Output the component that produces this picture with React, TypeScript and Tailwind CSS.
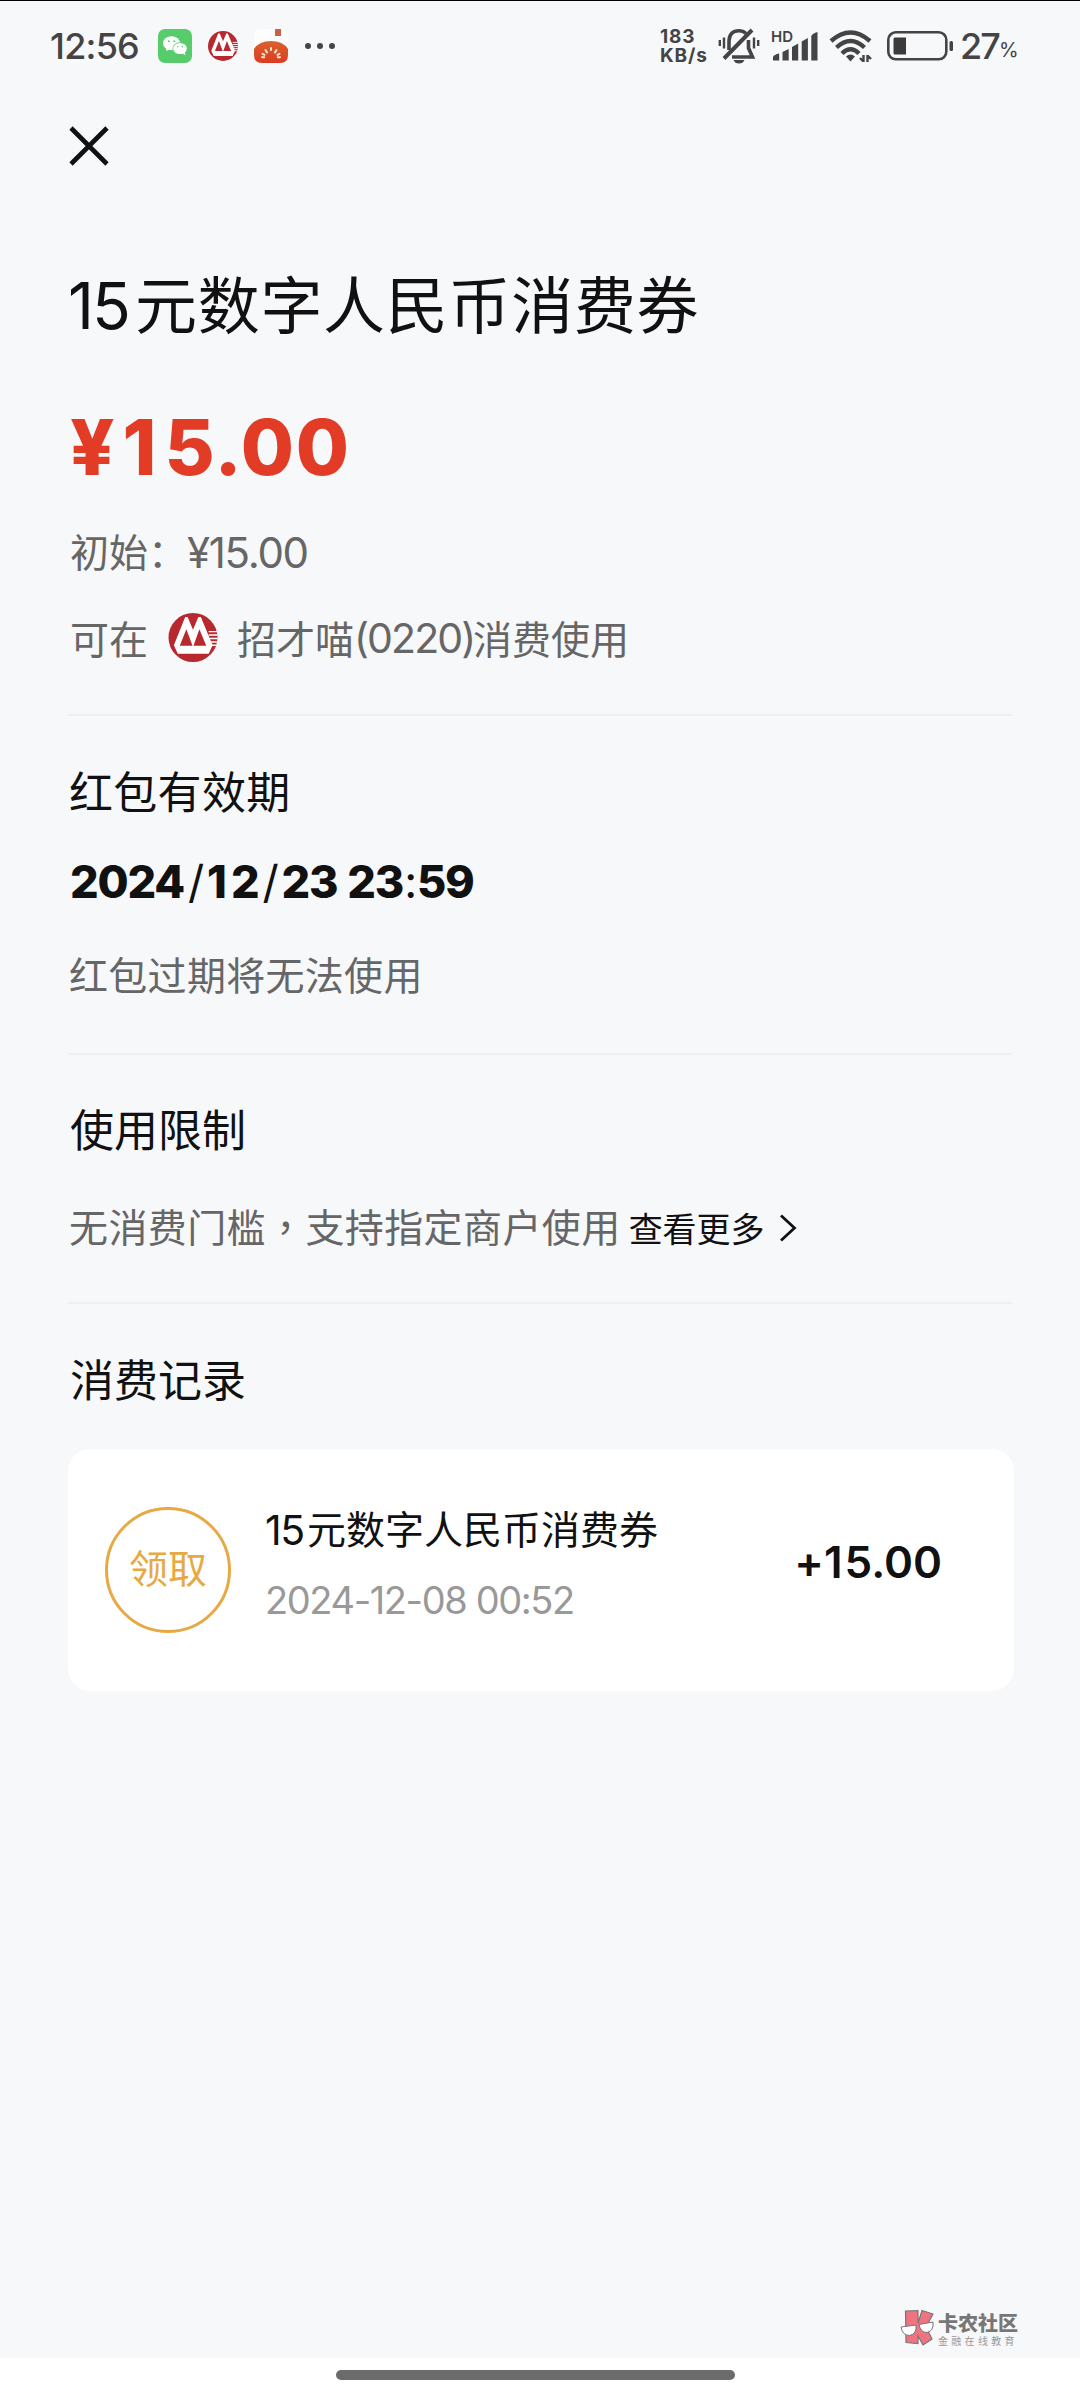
import React from "react";

const cjk = "font-['Noto_Sans_CJK_SC',sans-serif]";
const num = "font-['Inter','Noto_Sans_CJK_SC',sans-serif]";

const BankLogo: React.FC<{ className?: string }> = ({ className }) => (
  <svg viewBox="0 0 50 50" className={className}>
    <circle cx="25" cy="25" r="25" fill="#b8292f" />
    <path d="M17 4 H19.500 L25 17 L30.500 4 H33 L45 33 L41 41.500 H9.500 L5.500 33 Z" fill="#fff" />
    <path d="M18.200 16.500 L24.500 33.500 H11.500 Z" fill="#b8292f" />
    <path d="M31.500 16.500 L38.500 33.500 H25.500 Z" fill="#b8292f" />
    <path d="M41 19 H49.500 M41 22.500 H50 M42 26 H50 M43 29.500 H50 M44 33 H49" stroke="#fff" strokeWidth="1.500" />
  </svg>
);

const WechatIcon = () => (
  <svg width="34" height="34" viewBox="0 0 34 34">
    <rect width="34" height="34" rx="7" fill="#57cc6b" />
    <path d="M8 22 L8.500 18 L12 20 Z" fill="#fff" />
    <ellipse cx="13.500" cy="14.300" rx="8.500" ry="7" fill="#fff" />
    <ellipse cx="22" cy="19.500" rx="7.500" ry="6.300" fill="#57cc6b" />
    <ellipse cx="22" cy="19.500" rx="6.800" ry="5.600" fill="#fff" />
    <path d="M24 24 L27.300 26.300 L27 22.500 Z" fill="#fff" />
    <circle cx="10.800" cy="12.200" r="1" fill="#57cc6b" />
    <circle cx="16.300" cy="12.200" r="1" fill="#57cc6b" />
    <circle cx="19.800" cy="17.800" r=".8" fill="#57cc6b" />
    <circle cx="24.300" cy="17.800" r=".8" fill="#57cc6b" />
  </svg>
);

const PumpkinIcon = () => (
  <svg width="34" height="34" viewBox="0 0 34 34">
    <defs>
      <linearGradient id="pumpkin" x1="0" y1="0" x2="0" y2="1">
        <stop offset="0" stopColor="#d9642f" />
        <stop offset="1" stopColor="#dc3a20" />
      </linearGradient>
    </defs>
    <path d="M0 12 V7 Q0 0 7 0 H27 Q34 0 34 7 V18 H0 Z" fill="#fdfdfd" />
    <rect x="21" y="0" width="6" height="7" fill="#cd6046" />
    <path d="M0 20 Q5 12 17 12 Q29 12 34 20 V26 Q34 34 26 34 H8 Q0 34 0 26 Z" fill="url(#pumpkin)" />
    <path
      d="M17 19 V21 M11.500 21 L13 23.500 M22.500 21 L21 23.500 M8.500 24.800 L10.500 25.800 M25.500 24.800 L23.500 25.800 M8 28.300 H10.200 M26 28.300 H23.800"
      stroke="#ffe9d0"
      strokeWidth="2"
      strokeLinecap="round"
    />
  </svg>
);

const MutedBellIcon = () => (
  <svg width="42" height="36" viewBox="0 0 42 36" fill="none" stroke="#444" strokeWidth="3.600">
    <path d="M11 22 V13 Q11.500 2.800 21 2.800 Q25 2.800 28 5.500" />
    <path d="M30.500 12 V20 L34.500 29 H14" />
    <path d="M6 30.500 L34 2" strokeWidth="4" />
    <path d="M15.500 32 H26.500 Q25 35.500 21 35.500 Q17 35.500 15.500 32 Z" fill="#444" stroke="none" />
    <path d="M1.800 12 V18 M6 9.500 V20.500 M36 9.500 V20.500 M40.200 12 V18" strokeWidth="2.400" />
  </svg>
);

const SignalIcon = () => (
  <svg width="46" height="30" viewBox="0 0 46 30" fill="#444">
    <path d="M0 29.500 V26 Q1 23.500 6.200 22.500 V29.500 Z" />
    <path d="M9.500 29.500 V21 L15.700 18 V29.500 Z" />
    <path d="M19 29.500 V16 L25.200 12.500 V29.500 Z" />
    <path d="M28.700 29.500 V10.500 L34.900 7 V29.500 Z" />
    <path d="M38.300 29.500 V5 Q39.500 2.500 44.500 1 V29.500 Z" />
  </svg>
);

const WifiIcon = () => (
  <svg width="44" height="32" viewBox="0 0 44 32" fill="none" stroke="#444" strokeWidth="4.400">
    <path d="M2 11 Q21.500 -6 41 11" />
    <path d="M7.500 17.500 Q21.500 4.500 35.500 17.500" />
    <path d="M13 23.500 Q21.500 15 30 23.500" />
    <path d="M21.500 31.500 L17 26.500 Q21.500 22.500 26 26.500 Z" fill="#444" stroke="none" />
    <path d="M34.500 25 V32 M34.500 31.500 L31 28 M38.500 32 V25 M38.500 25.500 L42 29" strokeWidth="2.400" />
  </svg>
);

const BatteryIcon = () => (
  <svg width="67" height="30" viewBox="0 0 67 30">
    <rect x="1.300" y="1.300" width="58" height="27" rx="7.500" fill="none" stroke="#444" strokeWidth="2.600" />
    <path d="M8 6.500 H19 V23.500 H8 Q6.500 23.500 6.500 22 V8 Q6.500 6.500 8 6.500 Z" fill="#3b3b3b" />
    <rect x="62.500" y="10" width="3.500" height="10" rx="1.500" fill="#444" />
  </svg>
);

const WatermarkLogo = () => (
  <svg width="36" height="38" viewBox="0 0 36 38">
    <path
      d="M5.500 2 L18 1.500 V14 L22 1.500 L33 5 L26 18 L32 30 L23 36 L18 27 V34.500 L6 33.500 Z"
      fill="#ef7480"
      stroke="#777"
      strokeWidth="1.200"
    />
    <g fill="#fff" stroke="#777" strokeWidth="1">
      <path d="M1 18 L16 16 Q17 25 9.500 26.500 Q2.500 26.500 1 18 Z" />
      <path d="M19 15.500 L33 13 Q34 22 27 23.500 Q20.500 23.500 19 15.500 Z" />
    </g>
  </svg>
);

const StatusBar = () => (
  <header className="flex h-[91px] items-start justify-between pl-[50px] pr-[63px] pt-7 text-[#444]">
    <div className="flex h-[34px] items-center">
      <span className={`${num} w-[108px] text-[36px] font-medium leading-none tracking-[-0.800px]`}>12:56</span>
      <WechatIcon />
      <BankLogo className="ml-4 h-[30px] w-[30px]" />
      <div className="ml-4">
        <PumpkinIcon />
      </div>
      <div className="ml-[17px] flex gap-1.5">
        <i className="h-1.5 w-1.5 rounded-full bg-[#444]" />
        <i className="h-1.5 w-1.5 rounded-full bg-[#444]" />
        <i className="h-1.5 w-1.5 rounded-full bg-[#444]" />
      </div>
    </div>
    <div className="flex h-[34px] items-center">
      <div className={`${num} w-[58px] text-[19px] font-bold leading-[19px] tracking-[0.9px]`}>
        <div>183</div>
        <div>KB/s</div>
      </div>
      <MutedBellIcon />
      <div className="relative ml-[13px]">
        <SignalIcon />
        <span className={`${num} absolute -left-0.5 -top-0.5 text-[15px] font-semibold leading-none`}>HD</span>
      </div>
      <div className="ml-2.5">
        <WifiIcon />
      </div>
      <div className="ml-[14px]">
        <BatteryIcon />
      </div>
      <span className={`${num} ml-[6px] w-[39px] text-[36px] font-medium leading-none tracking-[-2px]`}>27</span>
      <span className={`${num} mt-2 w-[18px] text-[20px] leading-none`}>%</span>
    </div>
  </header>
);

const Divider: React.FC<{ className: string }> = ({ className }) => (
  <div className={`h-0.5 bg-[#eeeff1] ${className}`} />
);

export default function App() {
  return (
    <div className={`${cjk} flex h-[2400px] w-[1080px] flex-col overflow-hidden whitespace-nowrap bg-white text-[#111]`}>
      <div className="flex h-[2358px] flex-col border-t border-black bg-[#f7f8fa]">
        <StatusBar />

        <nav className="flex h-[108px] items-center pl-[69px]">
          <button type="button" aria-label="关闭">
            <svg width="40" height="40" viewBox="0 0 40 40" stroke="#111" strokeWidth="4.600">
              <path d="M2 2 L38 38 M38 2 L2 38" />
            </svg>
          </button>
        </nav>

        <main className="mx-[68px] pt-[62px]">
          <h1 className="flex h-20 text-[62px] leading-[80px]">
            <span className={`${num} w-[67px] pt-1 text-[64px] tracking-[-2px]`}>15</span>
            <span className="tracking-[0.7px]">元数字人民币消费券</span>
          </h1>
          <div className={`${num} mt-[60px] h-[90px] pl-0.5 text-[77px] font-extrabold leading-[90px] text-[#e23c26]`}>
            <span className="tracking-[8px]">¥1</span>
            <span className="tracking-[1.500px]">5.00</span>
          </div>
          <div className="mt-7 flex h-[60px] text-[39px] leading-[60px] text-[#666]">
            <span className="ml-0.5">初始：</span>
            <span className={`${num} pt-[3px] text-[42px] tracking-[-1.300px]`}>¥15.00</span>
          </div>
          <div className="mt-[27px] flex h-[60px] items-center text-[39px] leading-[60px] text-[#666]">
            <span className="ml-0.5 w-[98px]">可在</span>
            <BankLogo className="h-[49px] w-[50px]" />
            <span className="ml-[19px]">招才喵</span>
            <span className={`${num} w-[119px] pt-0.5 text-center text-[41px] tracking-[-1.900px]`}>(0220)</span>
            <span>消费使用</span>
          </div>

          <Divider className="mt-[47px]" />

          <h2 className="mt-11 h-[60px] pl-px text-[44px] leading-[60px] tracking-[0.3px]">红包有效期</h2>
          <div className={`${num} mt-8 h-[60px] pl-0.5 text-[45px] font-extrabold leading-[60px] tracking-[-1.200px]`}>
            2024<span className="ml-1 mr-1 font-normal">/</span>
            <span className="tracking-[4px]">1</span>2<span className="ml-1 mr-1 font-normal">/</span>23
            <span className="ml-2.5">23</span>
            <span className="mx-px font-normal">:</span>59
          </div>
          <p className="mt-[31px] h-[60px] pl-px text-[39px] leading-[60px] tracking-[0.3px] text-[#666]">红包过期将无法使用</p>

          <Divider className="mt-[50px]" />

          <h2 className="mt-[43px] h-[60px] pl-0.5 text-[44px] leading-[60px]">使用限制</h2>
          <div className="mt-[37px] flex h-[60px] items-center leading-[60px]">
            <span className="pl-px text-[39px] tracking-[0.4px] text-[#666]">
              无消费门槛<span className="font-['Noto_Sans_CJK_TC',sans-serif]" lang="zh-TW">，</span>支持指定商户使用
            </span>
            <a className="ml-2 mt-[5px] flex items-center text-[34px]">
              查看更多
              <svg className="ml-3.5" width="18" height="28" viewBox="0 0 18 28" fill="none" stroke="#111" strokeWidth="2.800">
                <path d="M2 1.500 L15.500 14 L2 26.500" />
              </svg>
            </a>
          </div>

          <Divider className="mt-[47px]" />

          <h2 className="mt-11 h-[60px] pl-0.5 text-[44px] leading-[60px]">消费记录</h2>
          <div className="-mr-0.5 mt-[41px] flex h-[242px] rounded-[22px] bg-white pl-[37px] pr-[72px] pt-[58px]">
            <div className="flex h-[126px] w-[126px] shrink-0 items-center justify-center rounded-full border-[3px] border-[#e6a943] pb-[7px] text-[39px] leading-none text-[#e6a943]">
              领取
            </div>
            <div className="ml-[34px] flex-1">
              <div className="-mt-2.5 flex h-[60px] text-[39px] leading-[60px]">
                <span className={`${num} w-[42px] pt-[3px] text-[41px] tracking-[-1.500px]`}>15</span>
                元数字人民币消费券
              </div>
              <div className={`${num} mt-[13px] h-[60px] text-[38px] leading-[60px] tracking-[-1.400px] text-[#999]`}>
                2024-12-08 00:52
              </div>
            </div>
            <div className={`${num} mt-[25px] h-[60px] text-[44px] font-semibold leading-[60px]`}>
              +<span className="tracking-[2px]">1</span>5.00
            </div>
          </div>
        </main>

        <footer className="mr-[62px] mt-auto flex h-[49px] items-start justify-end">
          <WatermarkLogo />
          <div className="ml-0.5 w-20 pt-0.5 text-[#777]">
            <div className="text-[20px] font-black leading-[24px]">卡农社区</div>
            <div className="text-[10px] leading-3 tracking-[3.300px] text-[#999]">金融在线教育</div>
          </div>
        </footer>
      </div>
      <div className="ml-[336px] mt-3 h-2.5 w-[399px] rounded-full bg-[#6b6b6b]" />
    </div>
  );
}
